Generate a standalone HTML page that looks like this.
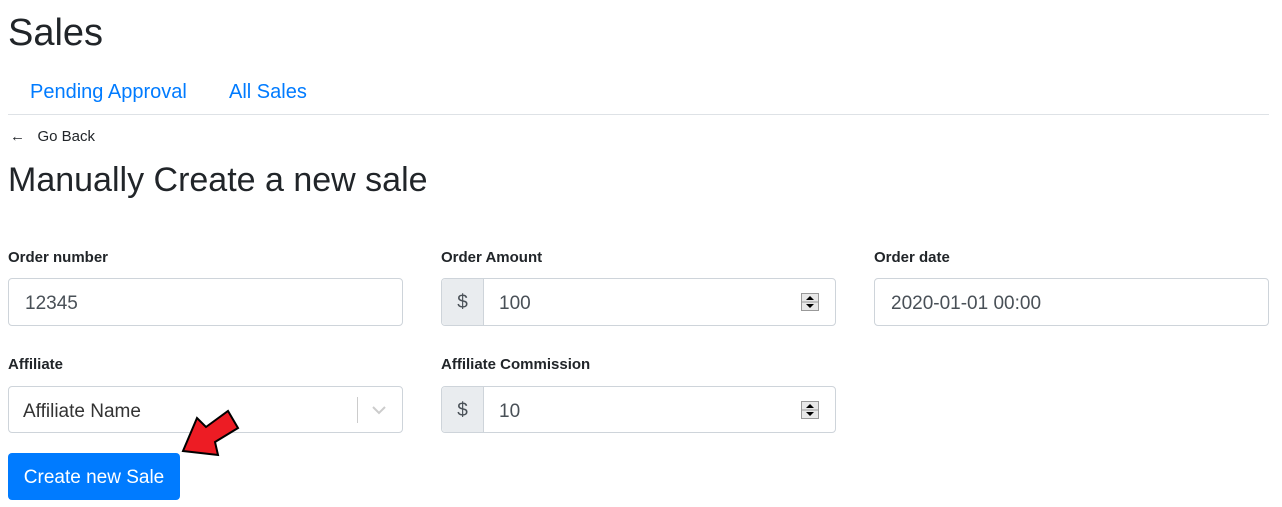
<!DOCTYPE html>
<html><head><style>
body{margin:0;font-family:"Liberation Sans",sans-serif;color:#212529;background:#fff;width:1282px;height:507px;overflow:hidden;position:relative}
.a{position:absolute;white-space:nowrap}
.inp{position:absolute;height:46px;border:1px solid #ced4da;border-radius:4px;background:#fff;box-sizing:border-box}
.t{position:absolute;font-size:19px;color:#495057;top:14px}
.pre{position:absolute;left:0;top:0;bottom:0;width:41px;background:#e9ecef;border-right:1px solid #ced4da;border-radius:4px 0 0 4px;font-size:19px;color:#495057;text-align:center;line-height:48px}
.lb{font-size:15px;font-weight:bold}
.spin{position:absolute;right:16px;top:14px;width:18px;height:18px}
</style></head><body>
<div class="a" style="left:8px;top:12px;font-size:38px">Sales</div>
<div class="a" style="left:30px;top:81px;font-size:20px;color:#007bff">Pending Approval</div>
<div class="a" style="left:229px;top:81px;font-size:20px;color:#007bff">All Sales</div>
<div class="a" style="left:8px;top:114px;width:1261px;height:1px;background:#dee2e6"></div>
<div class="a" style="left:10px;top:128px;font-size:15px">&larr;&nbsp;&nbsp; Go Back</div>
<div class="a" style="left:8px;top:161px;font-size:34px">Manually Create a new sale</div>

<div class="a lb" style="left:8px;top:249px">Order number</div>
<div class="a lb" style="left:441px;top:249px">Order Amount</div>
<div class="a lb" style="left:874px;top:249px">Order date</div>
<div class="inp" style="left:8px;top:278px;width:395px;height:48px"><span class="t" style="left:16px">12345</span></div>
<div class="inp" style="left:441px;top:278px;width:395px;height:48px"><div class="pre">$</div><span class="t" style="left:57px">100</span>
<svg class="spin" viewBox="0 0 18 18"><rect x="0.5" y="0.5" width="17" height="17" fill="#e8e8e8" stroke="#999"/><line x1="1" y1="9" x2="17" y2="9" stroke="#999"/><path d="M5 7L9 3L13 7Z M5 11L13 11L9 15Z" fill="#000"/></svg></div>
<div class="inp" style="left:874px;top:278px;width:395px;height:48px"><span class="t" style="left:16px">2020-01-01 00:00</span></div>

<div class="a lb" style="left:8px;top:356px">Affiliate</div>
<div class="a lb" style="left:441px;top:356px">Affiliate Commission</div>
<div class="inp" style="left:8px;top:386px;width:395px;height:47px"><span class="t" style="left:14px;color:#333">Affiliate Name</span>
<div style="position:absolute;left:348px;top:10px;width:1px;height:26px;background:#ccc"></div>
<svg style="position:absolute;left:362px;top:17px" width="16" height="12"><path d="M2 3l6 6 6-6" stroke="#ccc" stroke-width="2" fill="none"/></svg></div>
<div class="inp" style="left:441px;top:386px;width:395px;height:47px"><div class="pre">$</div><span class="t" style="left:57px">10</span>
<svg class="spin" viewBox="0 0 18 18"><rect x="0.5" y="0.5" width="17" height="17" fill="#e8e8e8" stroke="#999"/><line x1="1" y1="9" x2="17" y2="9" stroke="#999"/><path d="M5 7L9 3L13 7Z M5 11L13 11L9 15Z" fill="#000"/></svg></div>

<div class="a" style="left:8px;top:453px;width:172px;height:47px;background:#007bff;border-radius:4px;color:#fff;font-size:19px;text-align:center;line-height:50px">Create new Sale</div>
<svg class="a" style="left:0;top:0" width="300" height="507"><polygon points="183,451 197,418 206,427 228,411 238,428 215,442 218,455" fill="#ed1c24" stroke="#000" stroke-width="2" stroke-linejoin="miter"/></svg>
</body></html>
